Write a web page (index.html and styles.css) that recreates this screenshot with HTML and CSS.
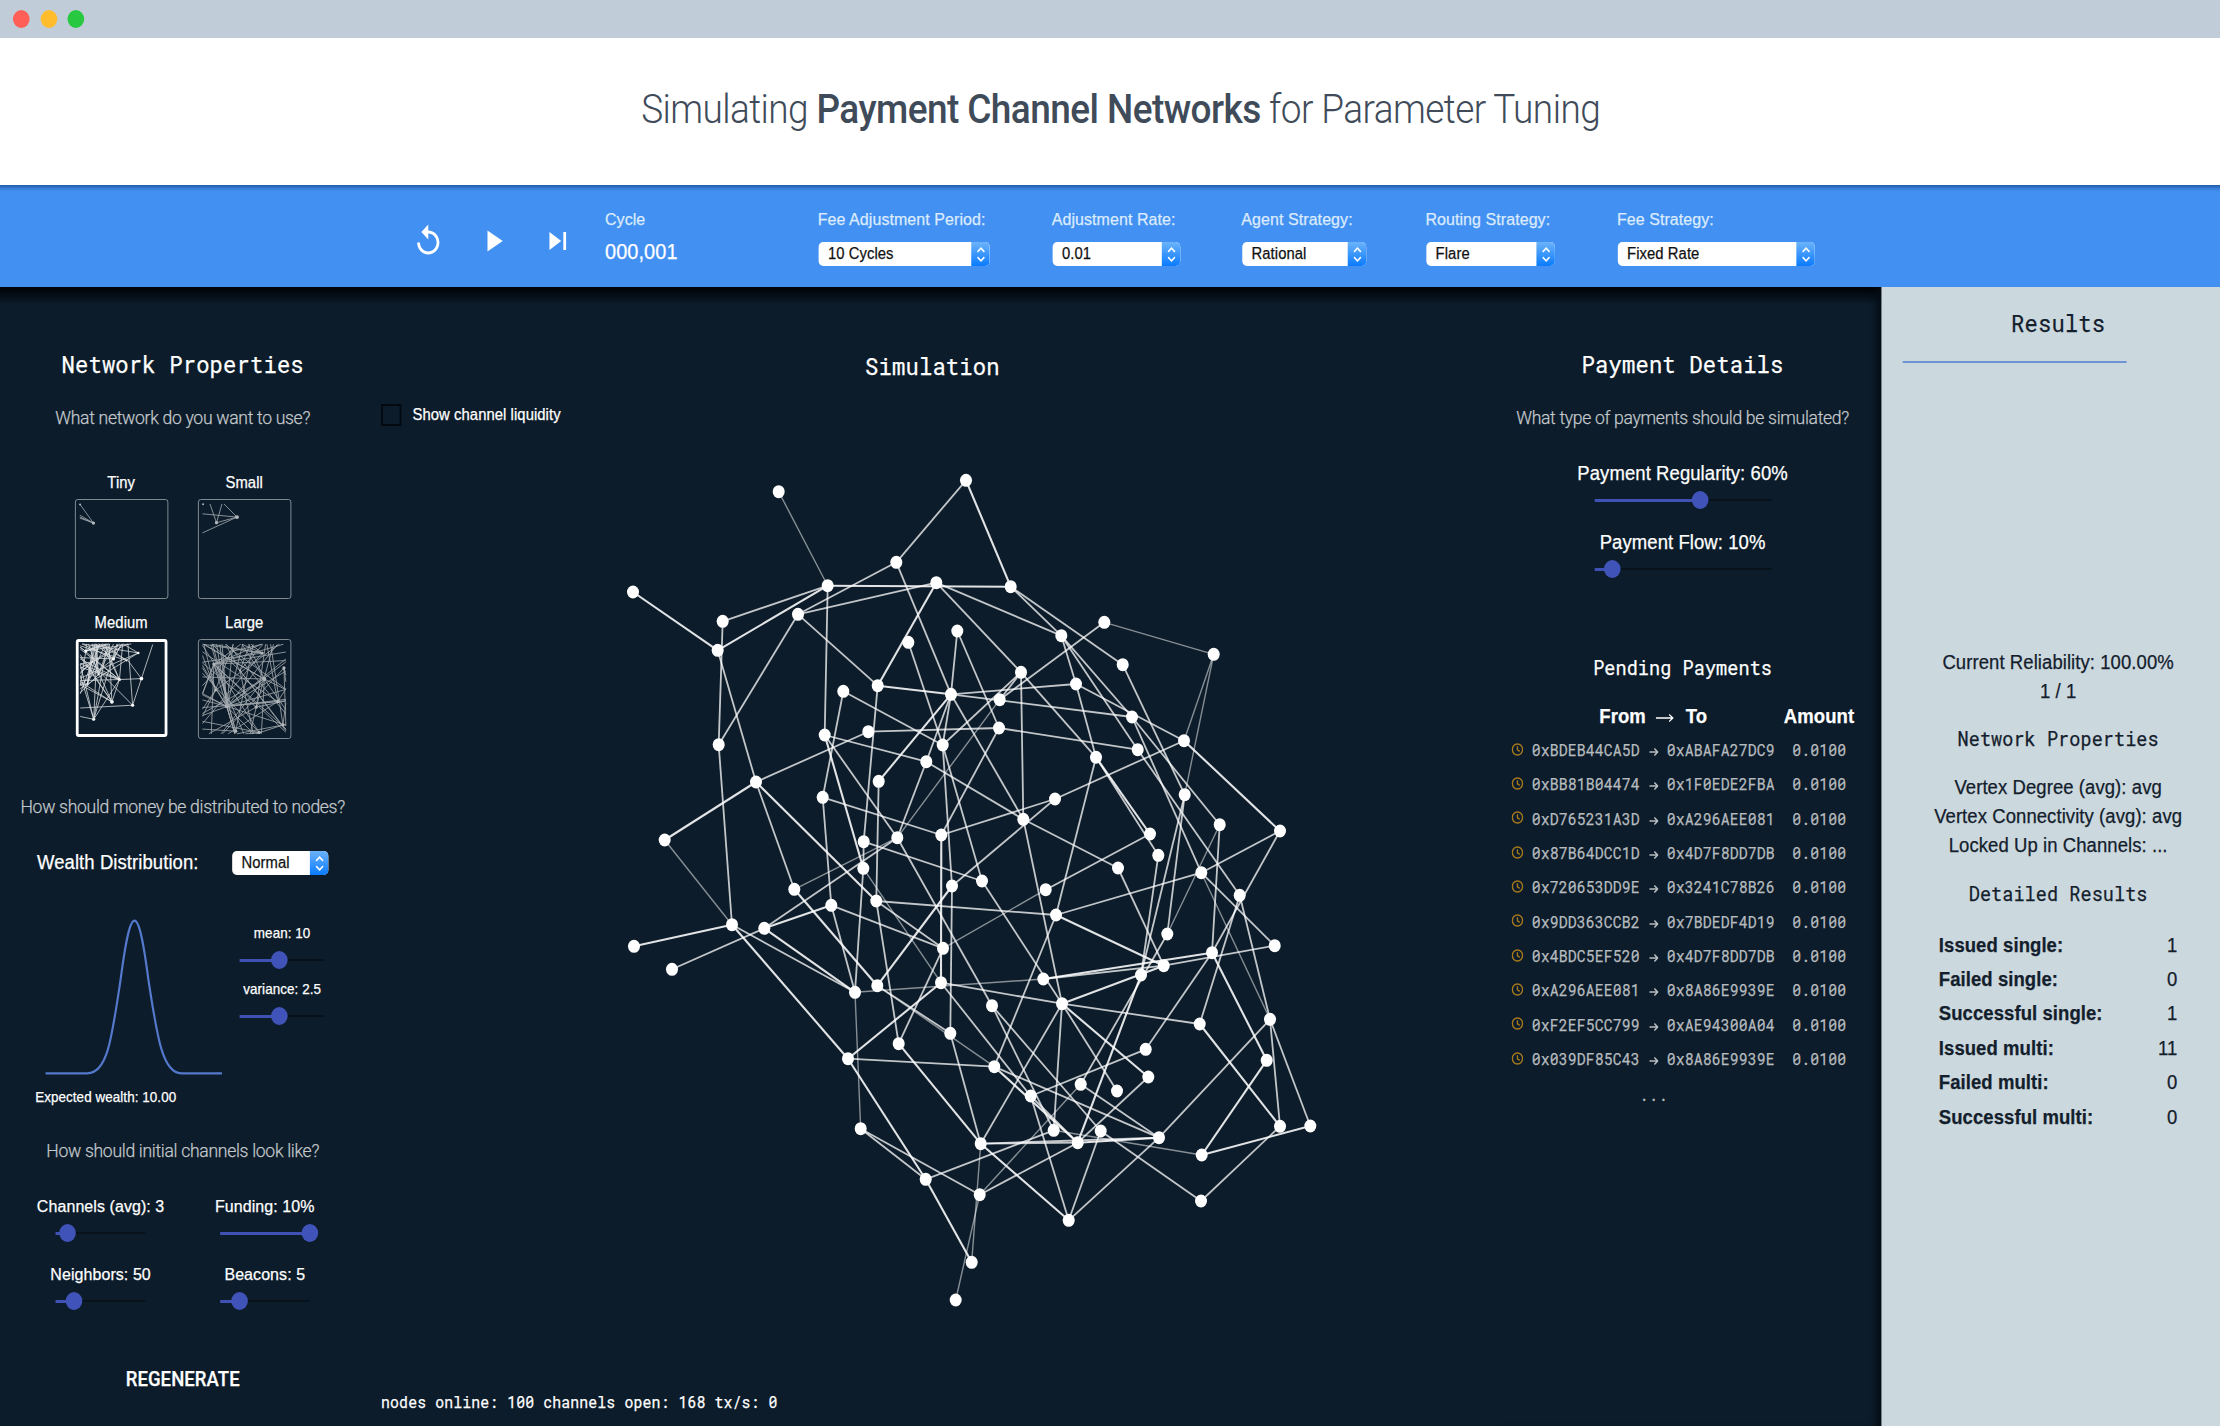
FILE: index.html
```html
<!DOCTYPE html>
<html lang="en">
<head>
<meta charset="utf-8">
<title>Payment Channel Networks</title>
<link rel="stylesheet" href="styles.css">
</head>
<body>
<div class="frame">
<div class="stage">
  <div class="titlebar"><i class="light red"></i><i class="light amber"></i><i class="light green"></i></div>
  <header class="hero"><h1>Simulating <b>Payment Channel Networks</b> for Parameter Tuning</h1></header>

  <div class="toolbar">
    <div class="controls">
      <svg class="ico" viewBox="0 0 24 24"><path d="M12 5V1L7 6l5 5V7c3.31 0 6 2.69 6 6s-2.69 6-6 6-6-2.69-6-6H4c0 4.42 3.58 8 8 8s8-3.58 8-8-3.58-8-8-8z"/></svg>
      <svg class="ico" viewBox="0 0 24 24"><path d="M8 5v14l11-7z"/></svg>
      <svg class="ico" viewBox="0 0 24 24"><path d="M6 18l8.500-6L6 6v12zM16 6v12h2V6h-2z"/></svg>
    </div>
    <div class="cycle"><span class="lbl">Cycle</span><span class="count">000,001</span></div>
    <div class="fields">
      <div class="field"><span class="lbl">Fee Adjustment Period:</span><div class="select w1"><span>10 Cycles</span><i><svg viewBox="0 0 10 16"><path d="M1.500 5.500 5 2l3.500 3.500M1.500 10.500 5 14l3.500-3.500"/></svg></i></div></div>
      <div class="field"><span class="lbl">Adjustment Rate:</span><div class="select w2"><span>0.01</span><i><svg viewBox="0 0 10 16"><path d="M1.500 5.500 5 2l3.500 3.500M1.500 10.500 5 14l3.500-3.500"/></svg></i></div></div>
      <div class="field"><span class="lbl">Agent Strategy:</span><div class="select w3"><span>Rational</span><i><svg viewBox="0 0 10 16"><path d="M1.500 5.500 5 2l3.500 3.500M1.500 10.500 5 14l3.500-3.500"/></svg></i></div></div>
      <div class="field"><span class="lbl">Routing Strategy:</span><div class="select w4"><span>Flare</span><i><svg viewBox="0 0 10 16"><path d="M1.500 5.500 5 2l3.500 3.500M1.500 10.500 5 14l3.500-3.500"/></svg></i></div></div>
      <div class="field"><span class="lbl">Fee Strategy:</span><div class="select w5"><span>Fixed Rate</span><i><svg viewBox="0 0 10 16"><path d="M1.500 5.500 5 2l3.500 3.500M1.500 10.500 5 14l3.500-3.500"/></svg></i></div></div>
    </div>
  </div>

  <main class="main">
    <section class="panel">
      <h2>Network Properties</h2>
      <p class="ask">What network do you want to use?</p>
      <div class="thumbs">
        <div class="thumb"><span>Tiny</span><svg viewBox="224 538 281 298" preserveAspectRatio="none"><path d="M236 550l42 58M236 584l42 24M236 590l42 18M236 593l42 15"/><circle cx="237" cy="552" r="3"/><circle cx="278" cy="608" r="5"/></svg></div>
        <div class="thumb"><span>Small</span><svg viewBox="594 538 281 298" preserveAspectRatio="none"><path d="M605 580l106 10M605 638l106-48M628 550l20 57M665 550l-17 57M671 550l40 40M648 607l63-17"/><circle cx="607" cy="551" r="3"/><circle cx="711" cy="590" r="6"/><circle cx="648" cy="607" r="5"/></svg></div>
        <div class="thumb on"><span>Medium</span><svg id="medium" viewBox="227 956 274 294" preserveAspectRatio="none"></svg></div>
        <div class="thumb"><span>Large</span><svg id="large" viewBox="594 956 281 301" preserveAspectRatio="none"></svg></div>
      </div>
      <p class="ask second">How should money be distributed to nodes?</p>
      <div class="wealth"><span>Wealth Distribution:</span><div class="select w6"><span>Normal</span><i><svg viewBox="0 0 10 16"><path d="M1.500 5.500 5 2l3.500 3.500M1.500 10.500 5 14l3.500-3.500"/></svg></i></div></div>
      <div class="dist">
        <svg class="bell" viewBox="136 390 531 510" preserveAspectRatio="none"><path d="M136 880H262C322 880 335 780 362 600C378 480 390 422 404 422C418 422 430 480 446 600C473 780 490 880 545 880H667"/></svg>
        <div class="knobs">
          <span>mean: 10</span><div class="slider"><i style="width:47%"></i></div>
          <span>variance: 2.5</span><div class="slider"><i style="width:47%"></i></div>
        </div>
      </div>
      <p class="expected">Expected wealth: 10.00</p>
      <p class="ask third">How should initial channels look like?</p>
      <div class="params">
        <div><span>Channels (avg): 3</span><div class="slider"><i style="width:13%"></i></div></div>
        <div><span>Funding: 10%</span><div class="slider"><i style="width:100%"></i></div></div>
        <div><span>Neighbors: 50</span><div class="slider"><i style="width:20.5%"></i></div></div>
        <div><span>Beacons: 5</span><div class="slider"><i style="width:21.5%"></i></div></div>
      </div>
      <div class="regen">REGENERATE</div>
    </section>

    <section class="sim">
      <h2>Simulation</h2>
      <label class="liquidity"><i></i><span>Show channel liquidity</span></label>
      <svg id="graph" class="graph" viewBox="365.4 430 1134 950" preserveAspectRatio="none"></svg>
      <p class="status">nodes online: 100 channels open: 168 tx/s: 0</p>
    </section>

    <section class="panel right">
      <h2>Payment Details</h2>
      <p class="ask">What type of payments should be simulated?</p>
      <div class="flow">
        <span>Payment Regularity: 60%</span><div class="slider"><i style="width:60%"></i></div>
        <span>Payment Flow: 10%</span><div class="slider"><i style="width:10%"></i></div>
      </div>
      <h3>Pending Payments</h3>
      <div class="phead"><b>From</b><svg viewBox="0 0 20 12"><path d="M0 6h18.500M14.500 2.500 18.500 6l-4 3.500"/></svg><b>To</b><b class="amt">Amount</b></div>
      <div class="rows" id="rows"></div>
      <p class="more">...</p>
    </section>

    <aside class="results">
      <h2>Results</h2>
      <hr>
      <p class="rel">Current Reliability: 100.00%<br>1 / 1</p>
      <h3>Network Properties</h3>
      <p>Vertex Degree (avg): avg<br>Vertex Connectivity (avg): avg<br>Locked Up in Channels: ...</p>
      <h3>Detailed Results</h3>
      <dl>
        <dt>Issued single:</dt><dd>1</dd>
        <dt>Failed single:</dt><dd>0</dd>
        <dt>Successful single:</dt><dd>1</dd>
        <dt>Issued multi:</dt><dd>11</dd>
        <dt>Failed multi:</dt><dd>0</dd>
        <dt>Successful multi:</dt><dd>0</dd>
      </dl>
    </aside>
  </main>
</div>
</div>
<script src="graph.js"></script>
</body>
</html>
```
FILE: styles.css
```css
* { box-sizing: border-box; margin: 0; padding: 0; }
body { background: #0c1c2a; font-family: "Liberation Sans", Arial, sans-serif; }
i { font-style: normal; display: block; }
span { white-space: nowrap; }

.frame { width: 2220px; height: 1426px; overflow: clip; contain: strict; }

/* condensed stage: everything inside is drawn slightly narrow */
.stage { width: 2400px; height: 1426px; transform: scaleX(.925); transform-origin: 0 0; display: flex; flex-direction: column; letter-spacing: .08px; -webkit-text-stroke: .25px; }

.titlebar { height: 38px; flex: none; background: #c0cdd8; display: flex; align-items: center; gap: 11.500px; padding-left: 14px; }
.light { width: 18px; height: 18px; border-radius: 50%; }
.red { background: #ff5f57; }
.amber { background: #ffbd2e; }
.green { background: #28c940; }

.hero { height: 147px; flex: none; background: #fff; display: flex; align-items: center; justify-content: center; padding: 0 0 3px 23px; -webkit-text-stroke: 0; }
.hero h1 { font: 300 40px/48px Roboto, sans-serif; color: #404b5a; white-space: nowrap; letter-spacing: -.62px; }
.hero b { font-weight: 500; }

.toolbar { height: 102px; flex: none; background: #4291f2; box-shadow: inset 0 8px 6px -6px rgba(10,50,110,.7); display: flex; padding-left: 445px; color: #fff; }
.controls { display: flex; gap: 34px; padding-top: 38px; width: 209px; }
.ico { width: 36px; height: 36px; fill: #fff; flex: none; }
.lbl { display: block; font-size: 17.300px; line-height: 22px; color: #dcebfd; }
.cycle { width: 230px; padding-top: 23px; }
.count { display: block; font-size: 21.600px; line-height: 26px; margin-top: 9px; }
.fields { display: grid; grid-template-columns: 253px 205px 199px 207px 214px; padding-top: 23px; height: 100%; align-content: start; }
.select { display: flex; height: 24px; border-radius: 5px; background: #fff; color: #111; font-size: 16px; line-height: 24px; overflow: hidden; margin: 12px 0 0 1px; }
.select span { flex: 1; padding-left: 10px; }
.select i { width: 20px; background: linear-gradient(#6cb3fa, #0a7bff); display: flex; align-items: center; justify-content: center; }
.select svg { width: 11px; height: 17px; fill: none; stroke: #fff; stroke-width: 1.500; }
.w1 { width: 185px; } .w2 { width: 138px; } .w3 { width: 134px; } .w4 { width: 139px; } .w5 { width: 213px; } .w6 { width: 104px; }

.main { flex: 1; display: grid; grid-template-columns: 395px 1226px 413px 366px; background: linear-gradient(#000205, #0c1c2a 18px); color: #fff; }
h2, h3 { font-family: "Roboto Mono", "DejaVu Sans Mono", monospace; font-weight: 400; text-align: center; white-space: nowrap; }
h2 { font-size: 24px; line-height: 32px; letter-spacing: .15px; }
h3 { font-size: 20px; line-height: 28px; }
.panel { padding-top: 61px; }
.ask { font: 300 19px/24px Roboto, sans-serif; color: #c3c8cc; text-align: center; margin-top: 26px; white-space: nowrap; letter-spacing: -.33px; }
.second { margin-top: 56px; }
.third { margin-top: 33px; }

.thumbs { display: grid; grid-template-columns: 101px 101px; column-gap: 32px; row-gap: 14px; justify-content: center; margin-top: 43px; font-size: 16px; line-height: 20px; text-align: center; }
.thumb { display: flex; flex-direction: column; align-items: center; gap: 6px; }
.thumb svg { width: 101px; height: 100px; border: 1.500px solid #858e95; border-radius: 3px; stroke: #a3a9ae; stroke-width: 2.500; fill: #b5babd; }
.thumb svg circle { stroke: none; }
.thumb svg path { fill: none; }
.thumb.on svg { width: 99px; height: 98px; border: 3px solid #fff; stroke: #d8dcdf; fill: #fff; }

.wealth { display: flex; justify-content: space-between; margin: 31px 40px 0; height: 25px; font-size: 20px; line-height: 24px; }
.wealth .select { margin: 1px 0 0; }

.slider { position: relative; height: 18px; background: linear-gradient(#07121b, #07121b) center / 100% 2px no-repeat; }
.slider i { position: relative; height: 18px; background: linear-gradient(#3f51b5, #3f51b5) center / 100% 3px no-repeat; }
.slider i::after { content: ""; position: absolute; right: -9px; top: 0; width: 18px; height: 18px; border-radius: 50%; background: #4053b8; }

.dist { display: flex; margin-top: 35px; padding-left: 49px; height: 170px; gap: 19px; }
.bell { width: 191px; height: 170px; fill: none; stroke: #5478cb; stroke-width: 6.500; }
.knobs { width: 92px; padding-top: 14px; font-size: 14.500px; line-height: 18px; display: flex; flex-direction: column; }
.knobs span { align-self: center; }
.knobs .slider { margin: 9px 0 11px; }
.expected { font-size: 14.500px; line-height: 18px; margin: 8px 0 0 38px; }

.params { display: grid; grid-template-columns: 1fr 1fr; row-gap: 21px; padding: 0 20px; margin-top: 32px; font-size: 17.300px; line-height: 22px; text-align: center; }
.params span { display: block; }
.params .slider { width: 97px; margin: 7px auto 0; }
.regen { font: 500 20px/28px Roboto, sans-serif; text-align: center; margin-top: 55px; }

.sim { padding-top: 63px; display: flex; flex-direction: column; }
.liquidity { display: flex; align-items: center; gap: 12px; margin: 22px 0 0 17px; height: 22px; font-size: 16px; }
.liquidity i { width: 22px; height: 22px; border: 2px solid #020910; }
.graph { width: 1226px; height: 950px; margin-top: 4px; fill: #fff; stroke: #fff; flex: none; }
.graph ellipse { stroke: none; }
.status { font: 16px/20px "Roboto Mono", "DejaVu Sans Mono", monospace; letter-spacing: .14px; margin: 12px 0 0 17px; }

.right { padding-right: 17px; box-shadow: inset -9px 0 8px -4px #050c14; }
.flow { display: flex; flex-direction: column; align-items: center; font-size: 20px; line-height: 26px; margin-top: 30px; }
.flow .slider { width: 191px; margin: 5px 0 20px; }
.right h3 { margin-top: 55px; }
.phead { display: flex; align-items: center; font-size: 20px; line-height: 28px; margin-top: 21px; padding-left: 108px; }
.phead svg { width: 20px; height: 12px; margin: 4px 12px 0 11px; fill: none; stroke: #fff; stroke-width: 1.300; }
.amt { margin-left: 83px; }
.rows { margin-top: 3px; }
.row { display: grid; grid-template-columns: 25.500px 117px 29px 135.500px auto; align-items: center; padding-left: 9.500px; height: 34.330px; font: 16px/20px "Roboto Mono", "DejaVu Sans Mono", monospace; color: #b6bbbf; letter-spacing: .13px; }
.clock { width: 13px; height: 13px; fill: none; stroke: #a87a1c; stroke-width: 1.800; margin-left: 3px; margin-top: -2px; }
.arrow { width: 10px; height: 10px; fill: none; stroke: #b6bbbf; stroke-width: 1.700; justify-self: center; margin-top: 4px; }
.more { font: 16px/20px "Roboto Mono", "DejaVu Sans Mono", monospace; color: #b6bbbf; text-align: center; margin-top: 9px; padding-right: 62px; letter-spacing: .8px; }

.results { background: #cbd8de; color: #13202c; padding: 20px 0 0 16px; text-align: center; font-size: 20px; line-height: 28.700px; }
.results hr { border: 0; height: 2px; background: #6f93d4; width: 242px; margin: 22px 0 0 7px; }
.rel { margin-top: 285px; }
.results h3 { margin: 19px 0 21px; font-size: 20px; line-height: 28px; }
.results dl { display: grid; grid-template-columns: auto auto; justify-content: space-between; padding: 0 46px; line-height: 34.400px; margin-top: 3px; }
.results dt { font-weight: 700; text-align: left; }
.results dd { text-align: right; }
```
FILE: graph.js
```js
const nodes = [[778.7,491.7],[966,480.3],[896.3,562.3],[827.7,585.7],[936.3,582.7],[633,592],[798,614.3],[722.7,621.3],[717.7,650.3],[957.3,631],
[908.3,642.3],[877.7,685.7],[843.3,691.3],[951,694.3],[824.7,735],[868.3,731.7],[942.7,745],[718.7,744.7],[926.3,761.7],[756,782],
[878.7,781.3],[822.7,797.3],[664.7,840],[941.3,835],[897.3,837.7],[863.7,841.7],[1010.7,586.7],[1104.3,622.3],[1061.3,635.7],[1213.7,654.3],
[1122.7,664.7],[1021,672.3],[1076,684],[999.7,699.7],[1132,717],[999,728],[1184,740.7],[1137.7,749.7],[1096,757.3],[1184.7,794.7],
[1219.7,824.7],[1055,799],[1023.3,819.3],[1150,834],[1280,831],[1158.3,855.3],[863.3,868.3],[794.3,889.3],[831.3,905.3],[876.3,901],
[952,886],[732,924.7],[764.3,928.3],[634,946.3],[672,969.3],[943,948.3],[855,992.3],[877.3,985.7],[941,982.7],[898.7,1043.7],
[950.3,1033.3],[848,1058.7],[860.7,1128.7],[925.7,1179.3],[971.7,1262.3],[955.7,1300],[982,881],[1045.7,889.7],[1118,868],[1201.3,872.7],
[1239.7,895.3],[1056,915],[1167.3,934],[1274.7,945.7],[1212,952.7],[1163.7,965.7],[1141,975],[1043.3,979],[1062,1003.7],[992,1005.7],
[1270,1019.3],[1199.7,1024],[1145.7,1049.3],[1266.7,1060.3],[994.3,1066.7],[1148.3,1077],[1080.7,1084.3],[1117,1091],[1030.7,1096],[1053.7,1130.3],
[1100.7,1131],[1077.7,1142.7],[1159,1137.7],[980.7,1143.7],[1201.7,1155],[1280,1126.3],[1310.3,1126],[1201,1201],[979.7,1194.7],[1068.7,1220.3]];

const channels = {
  thin: '0-3 33-24 22-51 29-39 24-47 46-58 40-72 67-55 69-80 98-65 86-98 89-94 56-77 57-84 29-36 56-62 27-29 93-64',
  mid: '1-2 2-6 2-13 3-7 3-14 4-6 4-28 4-31 7-17 8-19 6-17 6-11 12-21 12-16 10-16 9-13 9-35 15-19 15-35 14-18 14-24 25-46 11-25 13-32 13-34 13-16 13-18 13-42 31-16 31-33 27-33 35-23 18-42 18-24 16-50 16-66 20-49 19-47 17-51 21-23 21-48 23-41 24-52 24-79 25-66 26-30 26-28 28-32 32-38 28-34 28-37 30-39 32-36 31-38 31-42 35-37 34-40 34-69 37-70 36-41 38-45 38-71 41-50 42-78 42-68 43-67 45-76 39-76 39-72 40-74 44-69 44-74 70-81 70-80 69-71 69-73 74-82 73-75 75-77 68-75 71-84 49-71 49-55 50-60 66-78 55-59 48-55 51-56 52-54 48-56 46-56 49-59 57-60 58-78 58-88 61-84 62-63 62-98 63-89 72-86 78-93 78-89 78-87 78-81 79-89 79-90 80-92 80-95 80-96 82-88 84-92 86-92 88-99 88-91 90-99 90-97 93-92 93-91 91-98 92-99 95-97 60-93 85-91',
  full: '1-26 3-8 3-26 4-11 5-8 11-13 13-20 14-46 19-22 19-49 23-58 36-44 38-43 47-57 50-57 51-53 51-61 52-48 52-56 58-61 59-93 61-63 63-64 74-77 74-83 75-78 71-75 76-91 78-85 81-95 83-94 84-91 91-92 93-99 94-96'
};
const looks = { thin: [1.4, .5], mid: [1.8, .75], full: [2.1, .88] };

let out = '';
for (const kind in channels) {
  const d = channels[kind].split(' ').map(e => {
    const [a, b] = e.split('-');
    return `<path d="M${nodes[a]}L${nodes[b]}"/>`;
  }).join('');
  out += `<g stroke-width="${looks[kind][0]}" stroke-opacity="${looks[kind][1]}">${d}</g>`;
}
out += nodes.map(([x, y]) => `<ellipse cx="${x}" cy="${y}" rx="6" ry="6.500"/>`).join('');
document.getElementById('graph').innerHTML = out;

// small seeded generator so the previews are the same on each load
let seed = 11;
const rnd = () => (seed = (seed * 16807) % 2147483647) / 2147483647;

const fan = (hubs, pick) => hubs.map(([x, y, n, r]) => {
  let s = '';
  for (let i = 0; i < n; i++) { const [px, py] = pick(); s += `<path d="M${x} ${y}L${px.toFixed(1)} ${py.toFixed(1)}"/>`; }
  return s + `<circle cx="${x}" cy="${y}" r="${r}"/>`;
}).join('');

document.getElementById('medium').innerHTML =
  fan([[357,1076,9,5],[333,1147,5,6],[275,1203,5,5],[338,1010,7,5],[417,991,4,4],[250,985,8,5],[270,1020,8,3],[290,1060,6,3],[255,1090,6,3],[380,1015,3,3]],
    () => rnd() < .5 ? [232, 965 + rnd() * 160] : [235 + rnd() * 160, 962]) +
  '<path d="M463 964L427 1073L399 1158L384 962M357 1076L427 1073L384 1015M399 1158L232 1167M399 1158L296 1054M357 1076L333 1147L275 1020M275 1203L232 1194M275 1203L357 1076"/><circle cx="427" cy="1073" r="6"/><circle cx="399" cy="1158" r="5"/>';

const edge = () => { const t = rnd(); return t < .3 ? [605, 970 + rnd() * 270] : t < .5 ? [861, 970 + rnd() * 270] : t < .8 ? [605 + rnd() * 250, 969] : [620 + rnd() * 170, 1244]; };
document.getElementById('large').innerHTML =
  fan([[680,1160,22,6],[795,1076,10,6],[640,1030,12,5],[770,1162,6,5],[836,1145,5,5],[852,1217,5,5],[779,1240,5,5],[788,996,6,5],[855,1042,4,5],[707,1236,4,5],[645,1110,6,4],[720,1050,7,3],[700,990,5,3]], edge);

const payments = ['BDEB44CA5D ABAFA27DC9','BB81B04474 1F0EDE2FBA','D765231A3D A296AEE081','87B64DCC1D 4D7F8DD7DB','720653DD9E 3241C78B26',
  '9DD363CCB2 7BDEDF4D19','4BDC5EF520 4D7F8DD7DB','A296AEE081 8A86E9939E','F2EF5CC799 AE94300A04','039DF85C43 8A86E9939E'];
document.getElementById('rows').innerHTML = payments.map(p => {
  const [from, to] = p.split(' ');
  return `<div class="row"><svg class="clock" viewBox="0 0 16 16"><circle cx="8" cy="8" r="6.800"/><path d="M8 4v4.500l3 1.800"/></svg><span>0x${from}</span>
  <svg class="arrow" viewBox="0 0 10 10"><path d="M0 5h9M5.500 1.500 9 5 5.500 8.500"/></svg><span>0x${to}</span><span>0.0100</span></div>`;
}).join('');
```
